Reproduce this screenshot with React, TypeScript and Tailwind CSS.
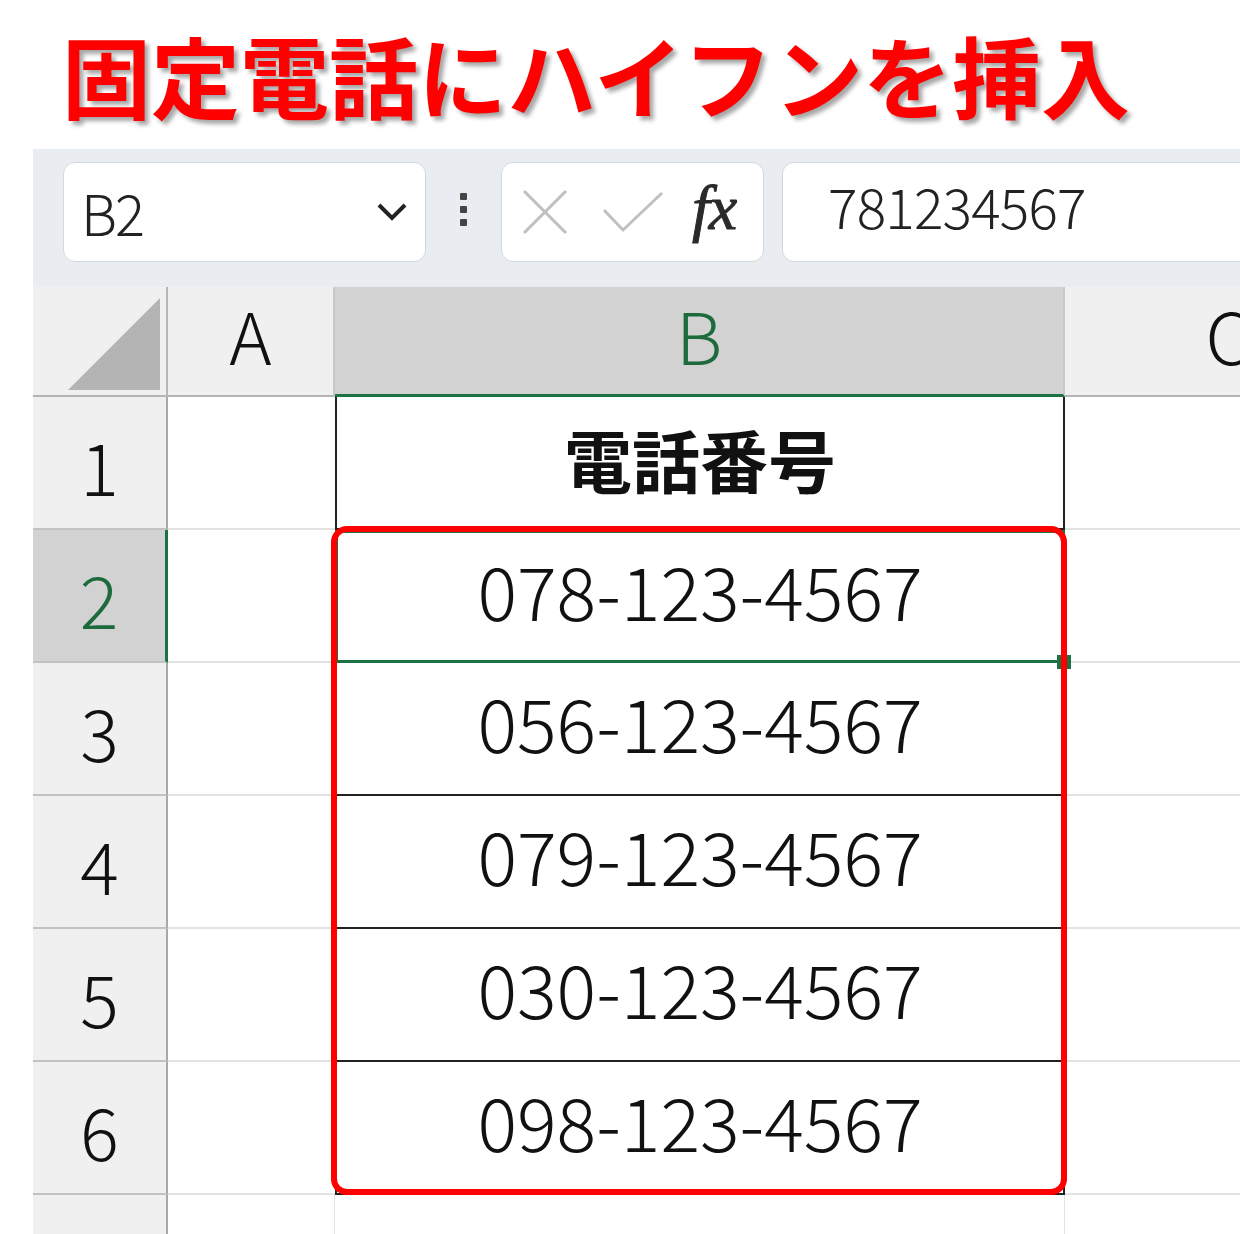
import React from "react"

const rows = ["電話番号", "078-123-4567", "056-123-4567", "079-123-4567", "030-123-4567", "098-123-4567"]

function Corner() {
  return (
    <div className="bg-[#f0f0f0] border-r-2 border-r-[#b8b8b8] border-b-2 border-b-[#b4b4b4]">
      <svg width="135" height="108" viewBox="0 0 135 108">
        <polygon points="127,11 127,103 35,103" fill="#b4b4b4" />
      </svg>
    </div>
  )
}

function ColHead({ label, selected }: { label: string; selected?: boolean }) {
  return (
    <div
      className={`flex items-center justify-center pb-[14px] text-[72px] font-light leading-none border-r-2 border-r-[#c8c8c8] ${
        selected
          ? "bg-[#d2d2d2] text-[#1d6b3c] border-b-[3px] border-b-[#1e7145]"
          : "bg-[#f0f0f0] text-[#111] border-b-2 border-b-[#b4b4b4]"
      }`}
    >
      {label}
    </div>
  )
}

function RowHead({ n, selected }: { n: number; selected?: boolean }) {
  return (
    <div
      className={`flex items-center justify-center text-[72px] font-light leading-none pt-[4px] border-b-2 border-b-[#c2c2c2] ${
        selected
          ? "bg-[#d2d2d2] text-[#1d6b3c] border-r-[3px] border-r-[#1e7145]"
          : "bg-[#f0f0f0] text-[#111] border-r-2 border-r-[#a8a8a8]"
      }`}
    >
      {n}
    </div>
  )
}

export default function App() {
  return (
    <div className="w-[1240px] h-[1234px] bg-white overflow-hidden font-['Noto_Sans_CJK_JP',sans-serif]">
      <div className="h-[149px] pl-[62px] pt-[29px]">
        <h1 className="text-[89px] leading-none font-bold text-[#ff0000] whitespace-nowrap [text-shadow:4px_4px_4px_rgba(0,0,0,0.35)]">
          固定電話にハイフンを挿入
        </h1>
      </div>

      <div className="ml-[33px]">
        {/* formula bar */}
        <div className="h-[138px] bg-[#e9edf1] flex items-start pt-[13px] pl-[30px] overflow-hidden">
          <div className="w-[363px] h-[100px] shrink-0 bg-white rounded-[12px] border border-[#d4d8dc] flex items-center pl-[17px] pr-[17px]">
            <span className="flex-1 text-[56px] font-light leading-none tracking-[-2px] text-[#222]">B2</span>
            <svg width="32" height="22" viewBox="0 0 32 22">
              <polyline points="3,4 16,17 29,4" fill="none" stroke="#222" strokeWidth="4" />
            </svg>
          </div>
          <div className="w-[75px] h-[100px] shrink-0 flex flex-col items-center justify-center gap-[6px] pb-[6px]">
            <span className="w-[7px] h-[7px] bg-[#444] rounded-[1px]" />
            <span className="w-[7px] h-[7px] bg-[#444] rounded-[1px]" />
            <span className="w-[7px] h-[7px] bg-[#444] rounded-[1px]" />
          </div>
          <div className="w-[263px] h-[100px] shrink-0 bg-white rounded-[12px] border border-[#d4d8dc] flex items-center pl-[20px]">
            <svg width="46" height="46" viewBox="0 0 46 46">
              <line x1="2" y1="2" x2="44" y2="44" stroke="#c0c0c0" strokeWidth="3" />
              <line x1="44" y1="2" x2="2" y2="44" stroke="#c0c0c0" strokeWidth="3" />
            </svg>
            <svg width="62" height="42" viewBox="0 0 62 42" className="ml-[34px]">
              <polyline points="2,19 21,39 60,2" fill="none" stroke="#c0c0c0" strokeWidth="3" />
            </svg>
            <span className="ml-[28px] pb-[8px] text-[64px] leading-none italic tracking-[-1px] text-[#2a2a2a] [-webkit-text-stroke:1px_#2a2a2a] font-['Liberation_Serif',serif]">
              fx
            </span>
          </div>
          <div className="w-[600px] h-[100px] shrink-0 ml-[18px] bg-white rounded-[12px] border border-[#d4d8dc] flex items-center pl-[45px] pb-[14px]">
            <span className="text-[55px] font-light leading-none tracking-[-0.8px] text-[#222]">781234567</span>
          </div>
        </div>

        {/* sheet */}
        <div className="relative grid grid-cols-[135px_167px_730px_328px] grid-rows-[110px_repeat(6,133px)_40px]">
          <Corner />
          <ColHead label="A" />
          <ColHead label="B" selected />
          <ColHead label="C" />

          {rows.map((text, i) => {
            const n = i + 1
            const selected = n === 2
            return (
              <React.Fragment key={n}>
                <RowHead n={n} selected={selected} />
                <div className="border-b-2 border-b-[#e2e2e2]" />
                <div
                  className={`flex items-center justify-center leading-none text-[#111] ${
                    n === 1 ? "text-[68px] font-bold pb-[8px]" : "text-[74px] font-light pb-[15px]"
                  } ${
                    selected
                      ? "border-[3px] border-[#1e7145]"
                      : "border-l-2 border-r-2 border-b-2 border-[#222]"
                  }`}
                >
                  {text}
                </div>
                <div className="border-b-2 border-b-[#e2e2e2]" />
              </React.Fragment>
            )
          })}

          <div className="bg-[#f0f0f0] border-r-2 border-r-[#a8a8a8]" />
          <div className="border-r border-r-[#e2e2e2]" />
          <div className="border-r border-r-[#e2e2e2]" />
          <div />

          <div className="absolute left-[1024px] top-[368px] w-[14px] h-[14px] bg-[#1e7145]" />
          <div className="absolute left-[298px] top-[239px] w-[736px] h-[669px] border-[6px] border-[#ff0000] rounded-[16px]" />
        </div>
      </div>
    </div>
  )
}
